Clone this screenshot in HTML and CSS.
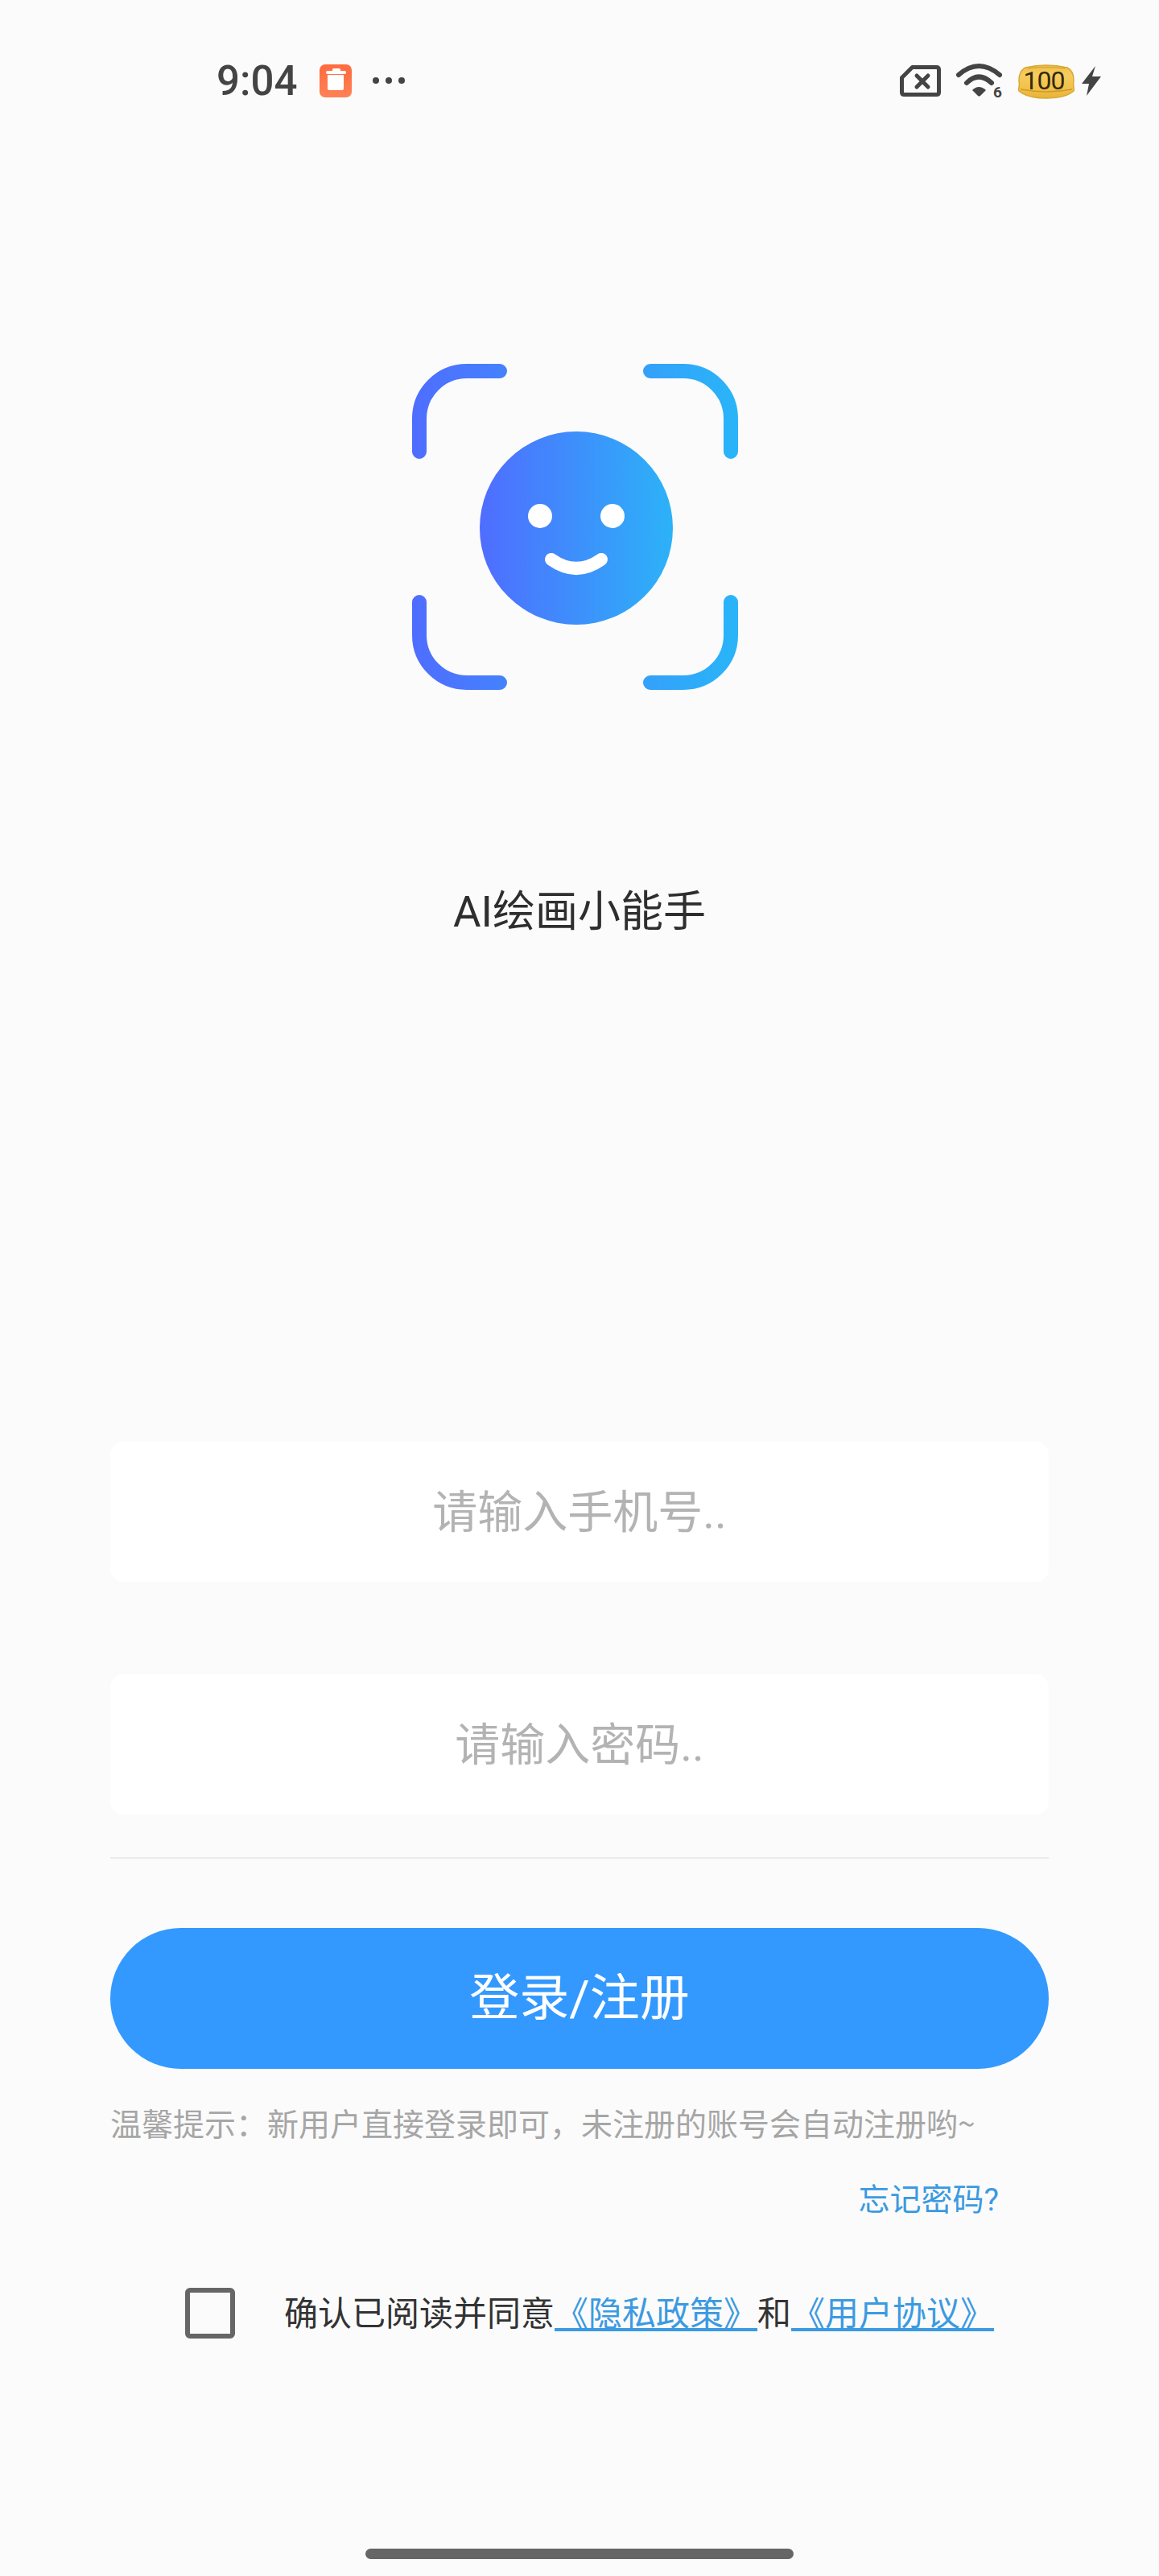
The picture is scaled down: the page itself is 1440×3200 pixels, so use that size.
FILE: index.html
```html
<!DOCTYPE html>
<html lang="zh-CN">
<head>
<meta charset="UTF-8" />
<meta name="viewport" content="width=device-width, initial-scale=1.0"/>
<title>AI绘画小能手</title>
<link rel="stylesheet" href="styles.css">
</head>
<body>
<div class="status-bar">
    <div class="status-left">
        <span class="time">9:04</span>
        <svg class="icon-app" width="40" height="41" viewBox="0 0 40 41">
            <defs>
                <linearGradient id="appBg" x1="0" y1="0" x2="0" y2="1">
                    <stop offset="0" stop-color="#ff6b3e"/>
                    <stop offset="1" stop-color="#ff8156"/>
                </linearGradient>
            </defs>
            <rect width="40" height="41" rx="7" fill="url(#appBg)"/>
            <path d="M16 8V6.5Q16 5 17.5 5H24.5Q26 5 26 6.5V8Z" fill="#fff"/>
            <rect x="8" y="8" width="25" height="4" rx="2" fill="#fff"/>
            <path d="M10 13H30V30Q30 32 28 32H12Q10 32 10 30Z" fill="#fff"/>
        </svg>
        <svg class="icon-dots" width="40" height="8" viewBox="0 0 40 8">
            <circle cx="4" cy="4" r="4" fill="#444"/>
            <circle cx="20" cy="4" r="4" fill="#444"/>
            <circle cx="36" cy="4" r="4" fill="#444"/>
        </svg>
    </div>
    <div class="status-right">
        <svg width="51" height="39" viewBox="0 0 51 39">
            <path d="M2.5 15.5L15.5 2.5H45.5Q48.5 2.5 48.5 5.5V33.5Q48.5 36.5 45.5 36.5H5.5Q2.5 36.5 2.5 33.5Z" fill="none" stroke="#444" stroke-width="5" stroke-linejoin="round"/>
            <path d="M21 13L35 27M35 13L21 27" fill="none" stroke="#444" stroke-width="5" stroke-linecap="round"/>
        </svg>
        <svg width="58" height="60" viewBox="0 0 58 60">
            <g transform="translate(0 8)">
                <path d="M3 15Q28 -7 54 15" fill="none" stroke="#444" stroke-width="6" stroke-linecap="round"/>
                <path d="M13 25Q28 10 44 25" fill="none" stroke="#444" stroke-width="6" stroke-linecap="round"/>
                <path d="M20 34Q28 26 37 34L30 41Q28 42 27 41Z" fill="#444"/>
            </g>
            <text class="wifi-num" x="46" y="51">6</text>
        </svg>
        <svg class="icon-battery" width="70" height="44" viewBox="0 0 70 44">
            <defs>
                <linearGradient id="batBg" x1="0" y1="0" x2="0" y2="1">
                    <stop offset="0" stop-color="#eebf4a"/>
                    <stop offset="0.3" stop-color="#f5cd5e"/>
                    <stop offset="0.75" stop-color="#f0bf47"/>
                    <stop offset="1" stop-color="#e6b23a"/>
                </linearGradient>
            </defs>
            <path d="M9 5Q35 -1 61 5Q69 9 69 21Q68 28 70 33Q60 43 35 43Q10 43 0 33Q2 28 1 21Q1 9 9 5Z" fill="url(#batBg)" stroke="#d9a733" stroke-width="1.5"/>
            <path d="M3 32Q35 38 67 32" fill="none" stroke="#cf9a2a" stroke-width="1.5"/>
            <path d="M12 6Q35 3 58 6" fill="none" stroke="#d9a733" stroke-width="1.5"/>
            <text class="battery-num" x="32" y="32">100</text>
        </svg>
        <svg class="icon-bolt" width="24" height="37" viewBox="0 0 24 37">
            <path d="M17 0L0 22H9L6 37L24 13H13Z" fill="#444"/>
        </svg>
    </div>
</div>

<svg class="logo" width="405" height="405" viewBox="0 0 405 405">
    <defs>
        <linearGradient id="frameGrad" gradientUnits="userSpaceOnUse" x1="0" y1="0" x2="405" y2="0">
            <stop offset="0" stop-color="#4f6dff"/>
            <stop offset="1" stop-color="#29b5f8"/>
        </linearGradient>
        <linearGradient id="faceGrad" x1="0" y1="0" x2="1" y2="0">
            <stop offset="0" stop-color="#4f6dff"/>
            <stop offset="1" stop-color="#2cb2f8"/>
        </linearGradient>
    </defs>
    <g fill="none" stroke="url(#frameGrad)" stroke-width="18" stroke-linecap="round">
        <path d="M9 109V68A59 59 0 0 1 68 9H109"/>
        <path d="M296 9H337A59 59 0 0 1 396 68V109"/>
        <path d="M9 296V337A59 59 0 0 0 68 396H109"/>
        <path d="M296 396H337A59 59 0 0 0 396 337V296"/>
    </g>
    <circle cx="204" cy="204" r="120" fill="url(#faceGrad)"/>
    <circle cx="159" cy="189" r="15" fill="#fff"/>
    <circle cx="249" cy="189" r="15" fill="#fff"/>
    <path d="M173 243Q204 265 235 243" fill="none" stroke="#fff" stroke-width="16" stroke-linecap="round"/>
</svg>

<div class="app-name">AI绘画小能手</div>

<div class="login-form">
    <div class="field">请输入手机号..</div>
    <div class="field field-password">请输入密码..</div>
    <div class="divider"></div>
    <div class="login-btn">登录/注册</div>
    <div class="hint">温馨提示：新用户直接登录即可，未注册的账号会自动注册哟~</div>
    <div class="forgot">忘记密码?</div>
    <div class="agreement">
        <span class="checkbox"></span>
        <span class="agreement-text">确认已阅读并同意<a class="link">《隐私政策》</a>和<a class="link">《用户协议》</a></span>
    </div>
</div>

<div class="home-bar"></div>
</body>
</html>
```

FILE: styles.css
```css
body {
    margin: 0;
    height: 3200px;
    overflow: hidden;
    background: #fbfbfb;
    font-family: Roboto, "Noto Sans CJK SC", sans-serif;
    color: #333;
}

.status-bar {
    display: flex;
    justify-content: space-between;
    align-items: center;
    height: 44px;
    padding: 78px 72px 0 269px;
}

.status-left {
    display: flex;
    align-items: center;
}

.time {
    margin: 2px 28px 0 0;
    font-size: 51px;
    font-weight: 500;
    line-height: 44px;
    color: #444;
}

.icon-dots {
    margin-left: 26px;
}

.status-right {
    display: flex;
    align-items: center;
    gap: 19px;
}

.icon-battery {
    margin-top: 2px;
}

.icon-bolt {
    margin-left: -10px;
}

.wifi-num {
    font-family: Roboto, sans-serif;
    font-size: 19px;
    font-weight: 700;
    fill: #444;
}

.battery-num {
    font-family: Roboto, sans-serif;
    font-size: 32px;
    letter-spacing: -1px;
    text-anchor: middle;
    fill: #33280c;
}

.logo {
    display: block;
    margin: 330px 0 0 512px;
}

.app-name {
    margin-top: 246px;
    font-size: 53px;
    line-height: 60px;
    text-align: center;
    color: #2e2e2e;
}

.login-form {
    margin: 628px 137px 0;
}

.field {
    height: 174px;
    line-height: 177px;
    background: #fff;
    border-radius: 16px;
    font-size: 56px;
    text-align: center;
    color: #b3b3b3;
}

.field-password {
    margin-top: 115px;
}

.divider {
    height: 2px;
    margin-top: 53px;
    background: #ebebeb;
}

.login-btn {
    height: 175px;
    margin-top: 86px;
    line-height: 175px;
    background: #3399ff;
    border-radius: 88px;
    font-size: 62px;
    text-align: center;
    color: #fff;
}

.hint {
    margin-top: 41px;
    font-family: "Noto Sans CJK SC", sans-serif;
    font-size: 39px;
    line-height: 50px;
    color: #a6a6a6;
}

.forgot {
    margin-top: 47px;
    padding-right: 62px;
    font-size: 39px;
    line-height: 50px;
    text-align: right;
    color: #3b9ae1;
}

.agreement {
    display: flex;
    align-items: center;
    margin-top: 84px;
    padding-left: 93px;
}

.checkbox {
    box-sizing: border-box;
    width: 62px;
    height: 63px;
    border: 6px solid #666;
    border-radius: 6px;
}

.agreement-text {
    margin-left: 61px;
    padding-top: 3px;
    font-size: 42px;
    line-height: 50px;
    white-space: nowrap;
}

.link {
    color: #3b9ae1;
    text-decoration: underline;
}

.home-bar {
    width: 532px;
    height: 13px;
    margin: 261px 0 0 454px;
    background: #666;
    border-radius: 7px;
}
```
